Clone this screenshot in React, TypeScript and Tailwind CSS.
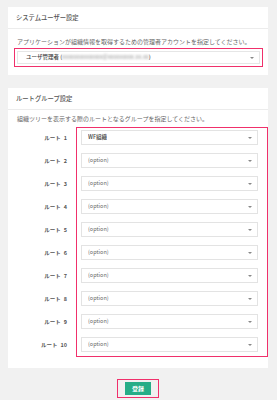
import React from 'react'

const font = { fontFamily: '"Noto Sans CJK JP", "Noto Sans", sans-serif' }

function Select({ children }: { children: React.ReactNode }) {
  return (
    <div className="flex h-[15px] items-center justify-between border border-[#e3e3e3] bg-white pl-[6px] pr-[5px] text-[5.5px] text-[#666]">
      <span className="truncate">{children}</span>
      <span className="h-0 w-0 border-x-[2px] border-t-[2.5px] border-x-transparent border-t-[#888]" />
    </div>
  )
}

function Panel({ title, children }: { title: string; children: React.ReactNode }) {
  return (
    <div className="bg-white">
      <div className="flex h-[22px] items-center border-b border-[#ececec] px-[8px] text-[6.3px] font-medium text-[#555]">
        {title}
      </div>
      {children}
    </div>
  )
}

const routes = Array.from({ length: 10 }, (_, i) => i + 1)

export default function App() {
  return (
    <div style={font} className="min-h-[400px] bg-[#f1f1f1] pl-[8px] pr-[9px] pt-[7px]">
      <Panel title="システムユーザー設定">
        <div className="pb-[8px] pl-[6px] pr-[5px] pt-[9px]">
          <p className="pl-[3px] text-[6px] leading-[8px] text-[#666]">
            アプリケーションが組織情報を取得するための管理者アカウントを指定してください。
          </p>
          <div className="mt-[2px] border border-[#f0306b] px-[2px] py-[2px]">
            <div className="flex h-[13px] items-center justify-between border border-[#e6e6e6] bg-white pl-[8px] pr-[5px] text-[5.5px] font-medium text-[#444]">
              <span>
                ユーザ管理者 (
                <span className="inline-block blur-[1.2px] text-[#aaa]">xxxxxxxxxxxxxx@xxxxxxxxx.xx.xx</span>
                )
              </span>
              <span className="h-0 w-0 border-x-[2px] border-t-[2.5px] border-x-transparent border-t-[#888]" />
            </div>
          </div>
        </div>
      </Panel>

      <div className="mt-[13px]">
        <Panel title="ルートグループ設定">
          <div className="pb-[11px] pl-[9px] pt-[5px]">
            <p className="text-[6px] leading-[8px] text-[#666]">
              組織ツリーを表示する際のルートとなるグループを指定してください。
            </p>
            <div className="mt-[4px] flex">
              <div className="flex w-[59px] flex-col gap-[8px] pr-[9px] pt-[4px]">
                {routes.map((n) => (
                  <div key={n} className="flex h-[15px] items-center justify-end gap-[3px] text-[5.5px] font-bold text-[#555]">
                    <span>ルート</span>
                    <span>{n}</span>
                  </div>
                ))}
              </div>
              <div className="flex flex-1 flex-col gap-[8px] border border-[#f0306b] pb-[4px] pl-[4px] pr-[9px] pt-[2px]">
                {routes.map((n) => (
                  <Select key={n}>
                    {n === 1 ? <span className="font-medium text-[#444]">WF組織</span> : '(option)'}
                  </Select>
                ))}
              </div>
            </div>
          </div>
        </Panel>
      </div>

      <div className="mt-[11px] flex justify-center">
        <div className="border border-[#f0306b] px-[7px] py-[2px]">
          <button className="flex h-[13px] w-[26px] items-center justify-center bg-[#26ad87] text-[6px] font-bold text-white">
            登録
          </button>
        </div>
      </div>
    </div>
  )
}
